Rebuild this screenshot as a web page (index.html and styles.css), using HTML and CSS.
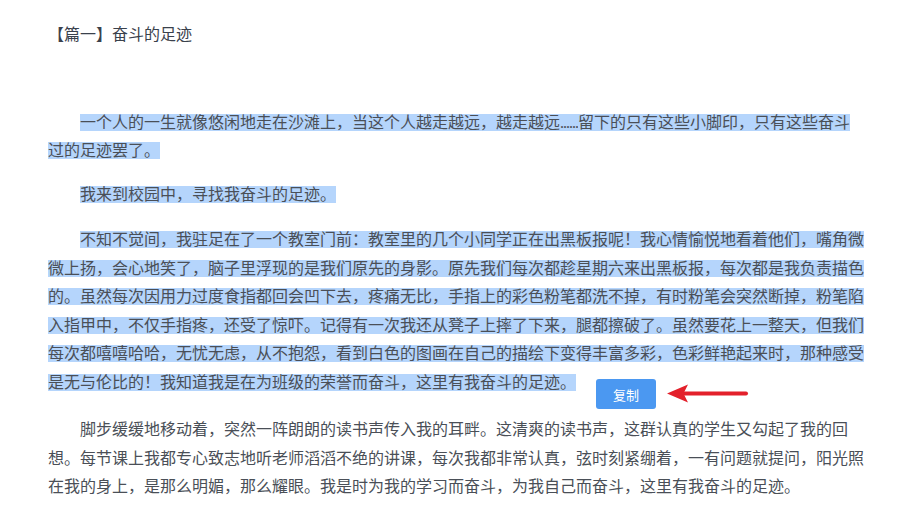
FILE: index.html
```html
<!DOCTYPE html>
<html lang="zh-CN">
<head>
    <meta charset="UTF-8">
    <meta name="viewport" content="width=device-width, initial-scale=1.0">
    <title>奋斗的足迹</title>
    <link rel="stylesheet" href="styles.css">
</head>
<body>
    <div class="article">
        <h3 class="article-title">【篇一】奋斗的足迹</h3>

        <p class="para"><span class="picked">一个人的一生就像悠闲地走在沙滩上，当这个人越走越远，越走越远</span><span class="picked dots">......</span><span class="picked">留下的只有这些小脚印，只有这些奋斗过的足迹罢了。</span></p>

        <p class="para"><span class="picked">我来到校园中，寻找我奋斗的足迹。</span></p>

        <p class="para para-3"><span class="picked">不知不觉间，我驻足在了一个教室门前：教室里的几个小同学正在出黑板报呢！我心情愉悦地看着他们，嘴角微微上扬，会心地笑了，脑子里浮现的是我们原先的身影。原先我们每次都趁星期六来出黑板报，每次都是我负责描色的。虽然每次因用力过度食指都回会凹下去，疼痛无比，手指上的彩色粉笔都洗不掉，有时粉笔会突然断掉，粉笔陷入指甲中，不仅手指疼，还受了惊吓。记得有一次我还从凳子上摔了下来，腿都擦破了。虽然要花上一整天，但我们每次都嘻嘻哈哈，无忧无虑，从不抱怨，看到白色的图画在自己的描绘下变得丰富多彩，色彩鲜艳起来时，那种感受是无与伦比的！我知道我是在为班级的荣誉而奋斗，这里有我奋斗的足迹。</span></p>

        <p class="para para-4">脚步缓缓地移动着，突然一阵朗朗的读书声传入我的耳畔。这清爽的读书声，这群认真的学生又勾起了我的回想。每节课上我都专心致志地听老师滔滔不绝的讲课，每次我都非常认真，弦时刻紧绷着，一有问题就提问，阳光照在我的身上，是那么明媚，那么耀眼。我是时为我的学习而奋斗，为我自己而奋斗，这里有我奋斗的足迹。</p>

        <!-- floating copy button for the selected text -->
        <div class="copy-tip">
            <button class="copy-btn">复制</button>
            <svg class="copy-arrow" width="86" height="20" viewBox="0 0 86 20">
                <line x1="18" y1="9.5" x2="82" y2="9.5" stroke="#e3202b" stroke-width="4" stroke-linecap="round"/>
                <path d="M3 9.5 L24 0.5 L19.5 9.5 L24 18.5 Z" fill="#e3202b"/>
            </svg>
        </div>
    </div>
</body>
</html>
```

FILE: styles.css
```css
* {
    margin: 0;
    padding: 0;
    box-sizing: border-box;
}

body {
    font-family: 'Liberation Serif', 'Noto Sans CJK SC', serif;
    font-size: 16px;
    color: #4a4f57;
    background: #ffffff;
    overflow: hidden;
    text-spacing-trim: space-all;
}

.article {
    position: relative;
    padding: 21px 44px 0 48px;
}

.article-title {
    font-size: 16px;
    font-weight: normal;
    line-height: 28.5px;
    color: #3a414c;
    margin-bottom: 59px;
}

.para {
    line-height: 28.5px;
    text-indent: 32px;
    margin-bottom: 15px;
}

.para-3 {
    margin-top: 17px;
}

.para-4 {
    margin-top: 19px;
}

.picked {
    background: #b5d5fc;
}

.dots {
    letter-spacing: -1px;
}

/* Copy popup */
.copy-tip {
    position: absolute;
    left: 596px;
    top: 379px;
    display: flex;
    align-items: center;
    gap: 8px;
}

.copy-btn {
    width: 60px;
    height: 30px;
    border: none;
    border-radius: 3px;
    background: #4b98f1;
    color: #ffffff;
    font-family: 'Noto Sans CJK SC', sans-serif;
    font-size: 13px;
    cursor: pointer;
}

.copy-arrow {
    display: block;
    margin-top: -1px;
}
```
